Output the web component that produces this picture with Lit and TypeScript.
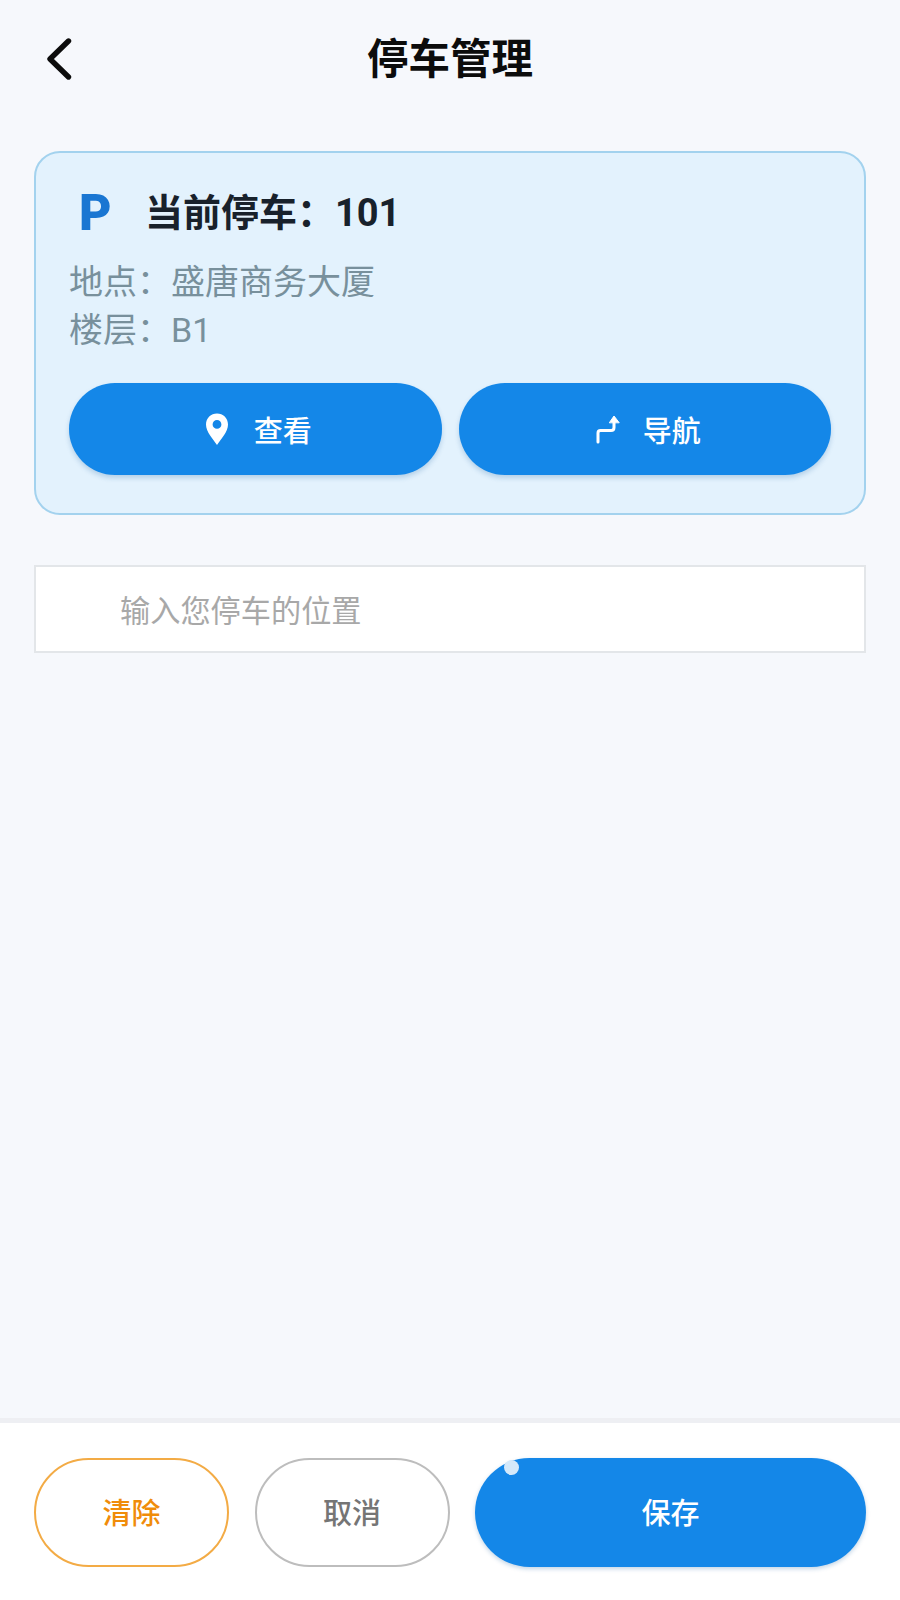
import { LitElement, html, css } from "lit";
import { customElement } from "lit/decorators.js";

@customElement("app-root")
export class AppRoot extends LitElement {
  static styles = css`
    :host {
      display: flex;
      flex-direction: column;
      height: 1600px;
      background: #f6f8fc;
      font-family: Roboto, "Noto Sans CJK SC", sans-serif;
      color: #111;
    }
    * { box-sizing: border-box; }
    .header {
      height: 118px;
      flex: none;
      display: flex;
      align-items: center;
      justify-content: center;
      position: relative;
      padding-top: 2px;
    }
    .back {
      position: absolute;
      left: 44px;
      top: 37px;
      width: 30px;
      height: 44px;
    }
    .title {
      font-size: 41.5px;
      font-weight: 700;
      color: #0c0c0c;
      line-height: 1;
    }
    .main {
      flex: 1;
      padding: 33px 34px 0;
      display: flex;
      flex-direction: column;
      gap: 50px;
    }
    .card {
      height: 364px;
      background: #e3f2fd;
      border: 2px solid #a3d2ee;
      border-radius: 26px;
      padding: 35px 33px 0;
    }
    .card-head {
      display: flex;
      align-items: center;
      height: 50px;
    }
    .p {
      width: 76px;
      padding-left: 10px;
      font-size: 50px;
      font-weight: 900;
      color: #1976d2;
      line-height: 1;
      flex: none;
    }
    .card-title {
      font-size: 38px;
      font-weight: 700;
      color: #18212b;
      line-height: 1;
    }
    .info {
      margin-top: 20px;
      font-size: 34px;
      line-height: 48px;
      color: #78909c;
    }
    .info-row {
      display: flex;
    }
    .info-label {
      width: 102px;
      flex: none;
    }
    .actions {
      margin-top: 29px;
      display: grid;
      grid-template-columns: 1fr 1fr;
      gap: 17px;
    }
    .btn {
      height: 92px;
      border-radius: 46px;
      background: #1487e8;
      color: #fff;
      display: flex;
      align-items: center;
      justify-content: center;
      font-size: 29px;
      font-weight: 500;
      padding-left: 5px;
      box-shadow: 0 3px 5px rgba(20, 90, 160, 0.22);
    }
    .view-icon {
      width: 26px;
      height: 34px;
      margin-right: 24px;
    }
    .nav-icon {
      width: 28px;
      height: 32px;
      margin-right: 21px;
    }
    .input {
      display: block;
      width: 100%;
      height: 88px;
      background: #fff;
      border: 2px solid #e3e6e9;
      padding: 4px 84px 0;
      font: inherit;
      font-size: 30.2px;
      outline: none;
      border-radius: 0;
    }
    .input::placeholder {
      color: #a8a8a8;
      opacity: 1;
    }
    .footer {
      flex: none;
      height: 182px;
      background: #fff;
      border-top: 5px solid #eeeff3;
      padding: 35px 34px 0;
      display: grid;
      grid-template-columns: 195px 195px 1fr;
      grid-template-rows: 109px;
      gap: 25.5px;
    }
    .fbtn {
      border-radius: 55px;
      display: flex;
      align-items: center;
      justify-content: center;
      font-size: 29px;
      font-weight: 500;
      padding-bottom: 3px;
    }
    .clear {
      border: 2px solid #f3ab45;
      color: #f08c0a;
    }
    .cancel {
      border: 2px solid #bdbdbd;
      color: #757575;
    }
    .save {
      position: relative;
      background: #1487e8;
      color: #fff;
      box-shadow: 0 2px 4px rgba(20, 90, 160, 0.25);
    }
    .dot {
      position: absolute;
      left: 29px;
      top: 2px;
      width: 15px;
      height: 15px;
      border-radius: 50%;
      background: #d5e9fa;
    }
  `;

  render() {
    return html`
      <div class="header">
        <svg class="back" viewBox="0 0 30 44" fill="none" stroke="#0c0c0c" stroke-width="5.4" stroke-linecap="round" stroke-linejoin="round">
          <path d="M24.5 4 L6 22 L24.5 40"></path>
        </svg>
        <div class="title">停车管理</div>
      </div>
      <div class="main">
        <div class="card">
          <div class="card-head">
            <div class="p">P</div>
            <div class="card-title">当前停车：101</div>
          </div>
          <div class="info">
            <div class="info-row"><span class="info-label">地点：</span><span>盛唐商务大厦</span></div>
            <div class="info-row"><span class="info-label">楼层：</span><span>B1</span></div>
          </div>
          <div class="actions">
            <div class="btn">
              <svg class="view-icon" viewBox="0 0 26 34">
                <path fill="#fff" fill-rule="evenodd" d="M13 33 C9 27 2 20 2 12.5 C2 6 7 1.5 13 1.5 C19 1.5 24 6 24 12.5 C24 20 17 27 13 33 Z M13 8 A4.4 4.4 0 1 0 13 16.8 A4.4 4.4 0 1 0 13 8 Z"></path>
              </svg>
              查看
            </div>
            <div class="btn">
              <svg class="nav-icon" viewBox="0 0 28 32" fill="none" stroke="#fff" stroke-width="3" stroke-linecap="round" stroke-linejoin="round">
                <path d="M4 29 V20 Q4 17.5 6.5 17.5 H17 Q20 17.5 20 14.5 V6"></path>
                <path d="M15.5 9.5 L20 3 L25 9.5 Z" fill="#fff" stroke-width="1"></path>
              </svg>
              导航
            </div>
          </div>
        </div>
        <input class="input" placeholder="输入您停车的位置" />
      </div>
      <div class="footer">
        <div class="fbtn clear">清除</div>
        <div class="fbtn cancel">取消</div>
        <div class="fbtn save"><span class="dot"></span>保存</div>
      </div>
    `;
  }
}
